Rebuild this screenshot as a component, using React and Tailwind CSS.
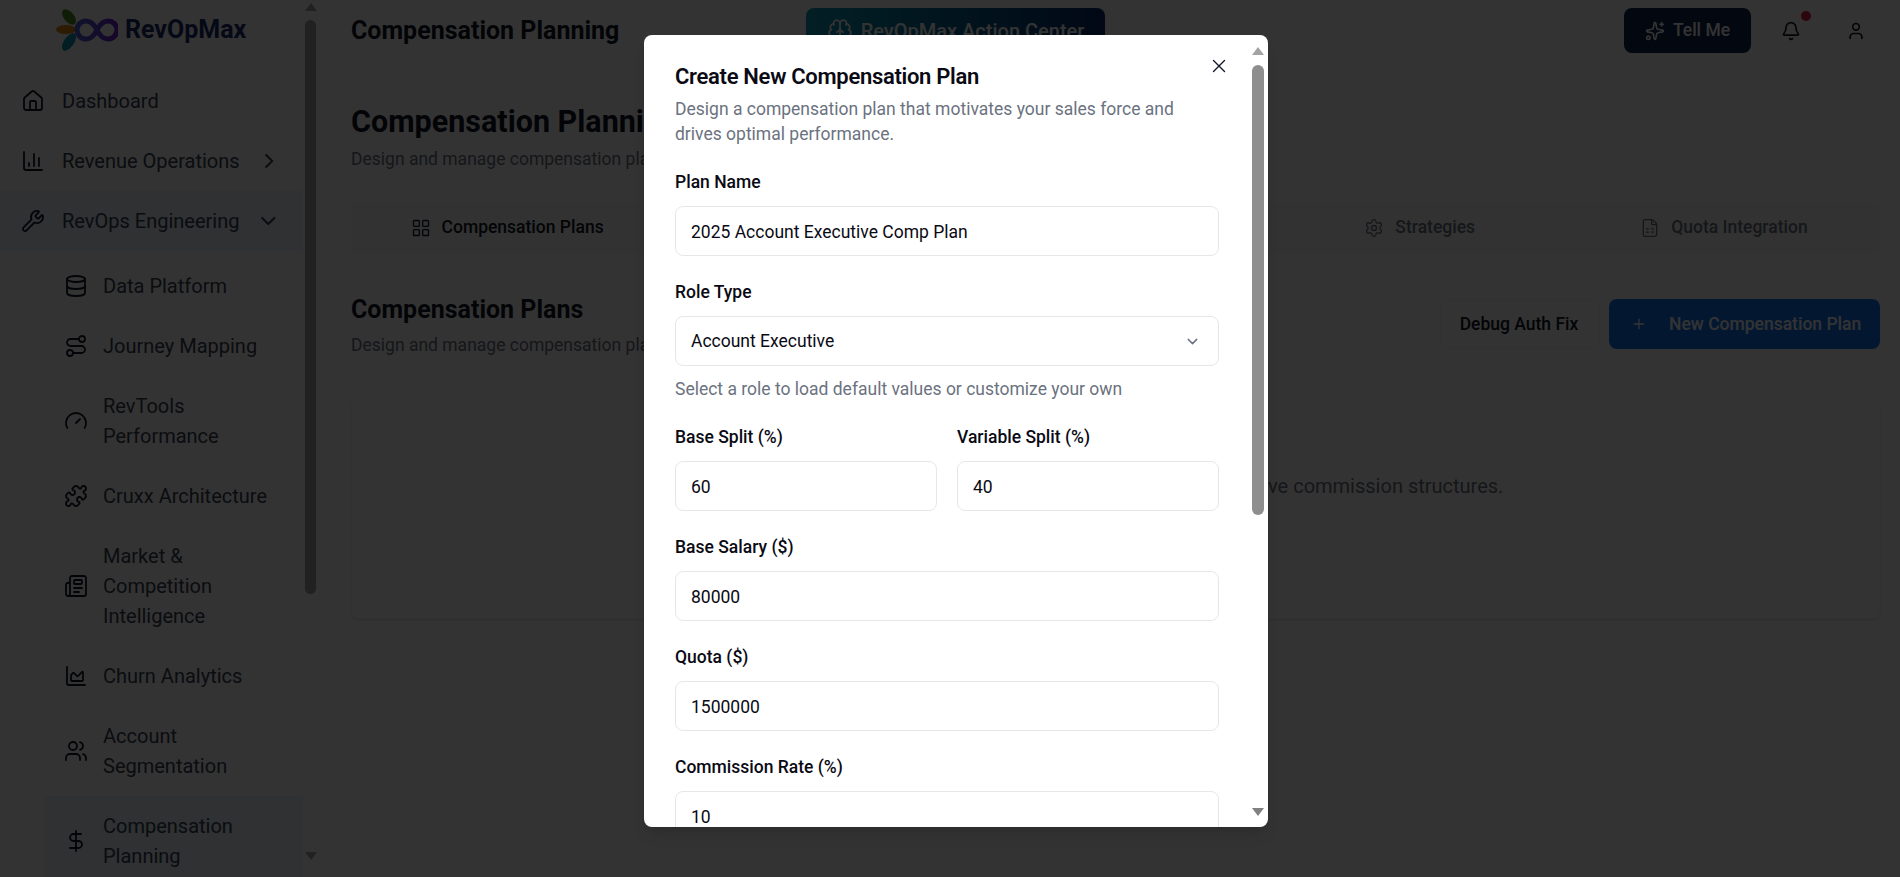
import React from "react";
import { Home, BarChart3, ChevronRight, ChevronDown, Wrench, Database, Route, Gauge, Puzzle, Newspaper, AreaChart, Users, DollarSign, LayoutGrid, Settings, FileSpreadsheet, Plus, Sparkles, Bell, User, X, Brain } from "lucide-react";

function Logo() {
  return (
    <svg width="62" height="42" viewBox="0 0 62 42" fill="none" className="shrink-0">
      <defs>
        <linearGradient id="inf" x1="0" y1="0" x2="1" y2="0">
          <stop offset="0" stopColor="#4f5fd9" />
          <stop offset="1" stopColor="#6d1fd1" />
        </linearGradient>
      </defs>
      <ellipse cx="13" cy="8" rx="9" ry="5" transform="rotate(50 13 8)" fill="#4d8a1f" />
      <ellipse cx="10" cy="20.5" rx="10" ry="4.5" fill="#e08c10" />
      <ellipse cx="13" cy="33" rx="10" ry="5" transform="rotate(-55 13 33)" fill="#0e8fb5" />
      <path d="M41 21c-3-6-7-9-11-9a9 9 0 0 0 0 18c4 0 8-3 11-9s7-9 11-9a9 9 0 0 1 0 18c-4 0-8-3-11-9Z" stroke="url(#inf)" strokeWidth="5" />
    </svg>
  );
}

function Nav({ icon: Icon, children, chevron, active, sub }) {
  return (
    <div className={`flex items-center ${sub ? "ml-[44px] pl-[20px] pr-[20px] gap-[15px]" : "pl-[21px] gap-[17px]"} py-[15px] ${active ? "bg-[#e8f2fb]" : ""}`}>
      <Icon className="w-[24px] h-[24px] shrink-0 text-[#111827]" strokeWidth={1.8} />
      <span className={`text-[20px] leading-[30px] text-[#374151] font-[Roboto,sans-serif] ${sub ? "flex-1" : "whitespace-nowrap"}`}>{children}</span>
      {chevron === "right" && <ChevronRight className="ml-auto w-[26px] h-[26px] mr-[22px] text-[#374151]" />}
      {chevron === "down" && <ChevronDown className="ml-auto w-[26px] h-[26px] mr-[22px] text-[#374151]" />}
    </div>
  );
}

function Field({ label, value }) {
  return (
    <label className="block">
      <span className="block text-[17.5px] leading-[24px] font-medium text-[#0a0a14]">{label}</span>
      <input readOnly value={value} className="mt-[12px] block w-full h-[50px] rounded-[8px] border border-[#e5e7eb] bg-white px-[15px] pt-[1px] text-[17.5px] text-[#0a0a14] outline-none" />
    </label>
  );
}

export default function App() {
  return (
    <div className="relative h-[877px] w-[1900px] overflow-hidden bg-white font-[Roboto,sans-serif]">
      <div className="flex h-full">
        <aside className="relative w-[318px] shrink-0 h-full overflow-hidden flex">
          <div className="flex-1 overflow-hidden">
            <div className="flex items-center h-[60px] pl-[56px] gap-[7px]">
              <Logo />
              <span className="text-[25px] font-bold text-[#1a2f70]">RevOpMax</span>
            </div>
            <div className="pt-[11px]">
              <Nav icon={Home}>Dashboard</Nav>
              <Nav icon={BarChart3} chevron="right">Revenue Operations</Nav>
              <Nav icon={Wrench} chevron="down" active>RevOps Engineering</Nav>
              <div className="pt-[5px]">
                <Nav icon={Database} sub>Data Platform</Nav>
                <Nav icon={Route} sub>Journey Mapping</Nav>
                <Nav icon={Gauge} sub>RevTools Performance</Nav>
                <Nav icon={Puzzle} sub>Cruxx Architecture</Nav>
                <Nav icon={Newspaper} sub>Market & Competition Intelligence</Nav>
                <Nav icon={AreaChart} sub>Churn Analytics</Nav>
                <Nav icon={Users} sub>Account Segmentation</Nav>
                <Nav icon={DollarSign} sub active>Compensation Planning</Nav>
              </div>
            </div>
          </div>
          <div className="w-[15px] shrink-0 flex flex-col items-center relative bg-white">
            <div className="mt-[3px] w-0 h-0 border-x-[6px] border-x-transparent border-b-[8px] border-b-[#a3a3a3]" />
            <div className="mt-[9px] w-[11px] h-[574px] rounded-full bg-[#a3a3a3]" />
            <div className="mt-auto mb-[17px] w-0 h-0 border-x-[6px] border-x-transparent border-t-[8px] border-t-[#a3a3a3]" />
          </div>
        </aside>
        <main className="flex-1 min-w-0 pl-[33px] pr-[20px]">
          <header className="flex items-center h-[61px]">
            <h2 className="text-[25px] font-bold text-[#111827] w-[455px]">Compensation Planning</h2>
            <button className="w-[299px] h-[45px] rounded-[8px] bg-gradient-to-r from-[#0e9cb8] to-[#0a2a6a] text-white text-[20px] font-medium flex items-center justify-center gap-[8px]">
              <Brain className="w-[26px] h-[26px]" strokeWidth={1.6} />RevOpMax Action Center
            </button>
            <div className="ml-auto flex items-center">
              <button className="w-[127px] h-[45px] rounded-[8px] bg-[#0b2350] text-white text-[17.5px] font-medium flex items-center justify-center gap-[8px]">
                <Sparkles className="w-[20px] h-[20px]" />Tell Me
              </button>
              <div className="relative ml-[30px]">
                <Bell className="w-[20px] h-[20px] text-[#111827]" />
                <span className="absolute -top-[10px] right-[-10px] w-[10px] h-[10px] rounded-full bg-[#e11d48]" />
              </div>
              <User className="ml-[45px] mr-[14px] w-[20px] h-[20px] text-[#111827]" />
            </div>
          </header>
          <div className="pt-[42px]">
            <h1 className="text-[30.5px] leading-[38px] font-bold text-[#111827]">Compensation Planning</h1>
            <p className="mt-[5.5px] text-[17.5px] leading-[24px] text-[#6b7280]">Design and manage compensation plans for your sales teams</p>
          </div>
          <div className="mt-[31px] flex h-[52px] px-[4px] rounded-[8px] bg-[#f9fafb]">
            <div className="flex-1 flex items-center justify-center gap-[11px] rounded-[6px] text-[17.5px] font-medium text-[#111827]"><LayoutGrid className="w-[20px] h-[20px]" strokeWidth={1.6} />Compensation Plans</div>
            <div className="flex-1" />
            <div className="flex-1" />
            <div className="flex-1 flex items-center justify-center gap-[11px] text-[17.5px] font-medium text-[#6b7280]"><Settings className="w-[20px] h-[20px]" strokeWidth={1.6} />Strategies</div>
            <div className="flex-1 flex items-center justify-center gap-[11px] text-[17.5px] font-medium text-[#6b7280]"><FileSpreadsheet className="w-[20px] h-[20px]" strokeWidth={1.6} />Quota Integration</div>
          </div>
          <div className="mt-[37.5px] flex items-start justify-between">
            <div>
              <h3 className="text-[25px] leading-[32px] font-bold text-[#111827] mt-[3px]">Compensation Plans</h3>
              <p className="mt-[7px] text-[17.5px] leading-[24px] text-[#6b7280]">Design and manage compensation plans for your team</p>
            </div>
            <div className="flex items-center gap-[9px] mt-[8px]">
              <button className="w-[160px] h-[50px] pr-[2px] rounded-[8px] bg-white border border-[#f3f4f6] text-[17.5px] font-medium text-[#111827]">Debug Auth Fix</button>
              <button className="w-[271px] h-[50px] rounded-[8px] bg-[#1574f5] text-white text-[17.5px] font-medium flex items-center pl-[22px] gap-[22px]"><Plus className="w-[16px] h-[16px]" />New Compensation Plan</button>
            </div>
          </div>
          <div className="mt-[41px] h-[221px] rounded-[8px] border border-[#f9fafb] shadow-sm flex justify-center pt-[73px] pr-[5px]">
            <p className="text-[20px] leading-[28px] text-[#6b7280]">Create your first compensation plan to define highly competitive commission structures.</p>
          </div>
        </main>
      </div>

      <div className="absolute inset-0 bg-black/80" />

      <div className="absolute left-[644px] top-[35px] w-[624px] h-[792px] rounded-[8px] bg-white overflow-hidden flex shadow-lg">
        <div className="flex-1 min-w-0 overflow-hidden pl-[31px] pr-[29px] pt-[28px] relative">
          <h2 className="text-[22px] leading-[28px] font-semibold tracking-[-0.3px] text-[#0a0a14]">Create New Compensation Plan</h2>
          <p className="mt-[6px] text-[17.5px] leading-[25px] text-[#6b7280]">Design a compensation plan that motivates your sales force and drives optimal performance.</p>
          <div className="mt-[23px] flex flex-col gap-[24px]">
            <Field label="Plan Name" value="2025 Account Executive Comp Plan" />
            <div>
              <span className="block text-[17.5px] leading-[24px] font-medium text-[#0a0a14]">Role Type</span>
              <div className="mt-[12px] flex items-center justify-between h-[50px] rounded-[8px] border border-[#e5e7eb] bg-white pl-[15px] pr-[17px] pt-[1px] text-[17.5px] text-[#0a0a14]">
                Account Executive<ChevronDown className="w-[17px] h-[17px] text-[#6b7280]" />
              </div>
              <p className="mt-[11px] -mb-[1px] text-[17.5px] leading-[25px] text-[#6b7280]">Select a role to load default values or customize your own</p>
            </div>
            <div className="grid grid-cols-2 gap-[20px]">
              <Field label="Base Split (%)" value="60" />
              <Field label="Variable Split (%)" value="40" />
            </div>
            <Field label="Base Salary ($)" value="80000" />
            <Field label="Quota ($)" value="1500000" />
            <Field label="Commission Rate (%)" value="10" />
          </div>
          <X className="absolute right-[18px] top-[20px] w-[22px] h-[22px] text-[#111827]" strokeWidth={1.5} />
        </div>
        <div className="w-[20px] shrink-0 flex flex-col items-center relative">
          <div className="mt-[12px] w-0 h-0 border-x-[6px] border-x-transparent border-b-[8px] border-b-[#a3a3a3]" />
          <div className="mt-[10px] w-[12px] h-[450px] rounded-full bg-[#8e8e8e]" />
          <div className="mt-auto mb-[11px] w-0 h-0 border-x-[6px] border-x-transparent border-t-[8px] border-t-[#808080]" />
        </div>
      </div>
    </div>
  );
}
